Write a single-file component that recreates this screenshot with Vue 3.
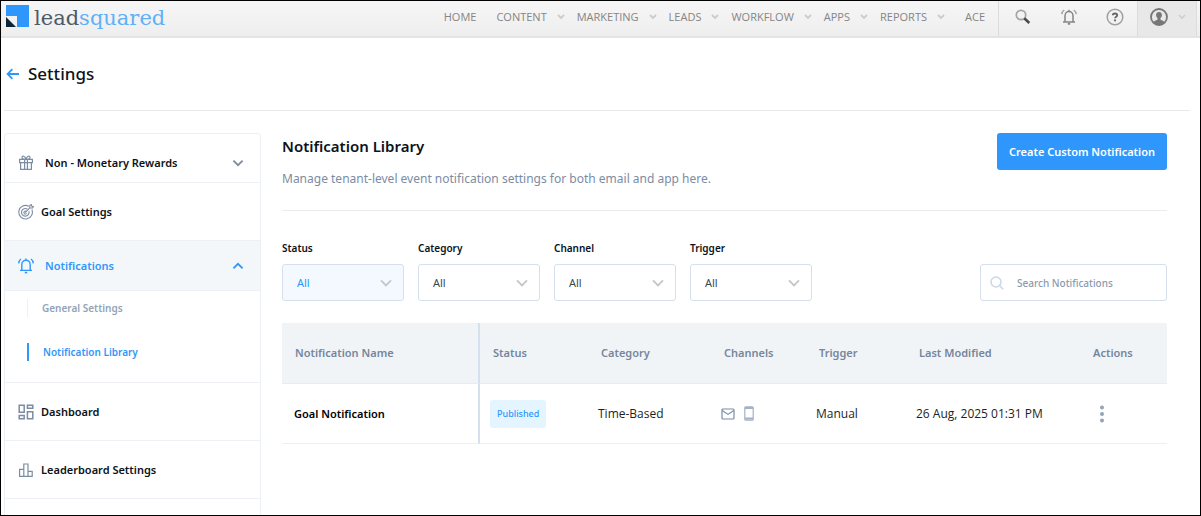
<script setup>
import { ref } from 'vue';

const navItems = [
  { label: 'Home', menu: false },
  { label: 'Content', menu: true },
  { label: 'Marketing', menu: true },
  { label: 'Leads', menu: true },
  { label: 'Workflow', menu: true },
  { label: 'Apps', menu: true },
  { label: 'Reports', menu: true },
  { label: 'Ace', menu: false }
];

const filters = ref([
  { id: 'status', label: 'Status', value: 'All', active: true },
  { id: 'category', label: 'Category', value: 'All', active: false },
  { id: 'channel', label: 'Channel', value: 'All', active: false },
  { id: 'trigger', label: 'Trigger', value: 'All', active: false }
]);

const search = ref('');

const notifications = [
  {
    id: 1,
    name: 'Goal Notification',
    status: 'Published',
    category: 'Time-Based',
    trigger: 'Manual',
    lastModified: '26 Aug, 2025 01:31 PM'
  }
];
</script>

<template>
  <div class="page">
    <header class="topbar">
      <a href="#" class="logo" aria-label="leadsquared">
        <svg width="23" height="23" viewBox="0 0 23 23">
          <path d="M0 0H23V22H11V11H0Z" fill="#2f97fb" />
          <path d="M0 12L10 22H0Z" fill="#0d2436" />
        </svg>
        <span class="logo-text">lead<span class="logo-blue">squared</span></span>
      </a>

      <nav class="nav">
        <a v-for="item in navItems" :key="item.label" href="#" class="nav-item" :class="{ plain: !item.menu }">
          {{ item.label }}
          <svg v-if="item.menu" width="8" height="6" viewBox="0 0 8 6">
            <path d="M1 1L4 4L7 1" fill="none" stroke="#cccccc" stroke-width="1.8" />
          </svg>
        </a>
      </nav>

      <div class="tools">
        <button type="button" class="tool" aria-label="Search">
          <svg width="16" height="16" viewBox="0 0 16 16" fill="none">
            <circle cx="6" cy="6" r="4.7" stroke="#a5a5a5" stroke-width="1.7" />
            <path d="M9.3 9.3L14.3 14" stroke="#4a4a4a" stroke-width="2.6" />
          </svg>
        </button>
        <button type="button" class="tool" aria-label="Notifications">
          <svg width="16" height="16" viewBox="0 0 16 16" fill="none" stroke="#858585" stroke-width="1.5">
            <path d="M2 13H14M4 13V7C4 4.4 5.8 2.6 8 2.6S12 4.4 12 7V13M8 0.8V2.6" />
            <path d="M6.8 14.8H9.2" stroke-width="1.8" />
            <path d="M3.2 1C1.8 2 1 3.4 0.8 5.2M12.8 1C14.2 2 15 3.4 15.2 5.2" stroke="#a5a5a5" />
          </svg>
        </button>
        <button type="button" class="tool" aria-label="Help">
          <svg width="18" height="18" viewBox="0 0 18 18" fill="none">
            <circle cx="9" cy="9" r="7.8" stroke="#a0a0a0" stroke-width="1.5" />
            <path d="M6.8 7.2C6.8 4.9 11.2 4.9 11.2 7.2C11.2 8.7 9 8.6 9 10.3" stroke="#666" stroke-width="1.8" />
            <path d="M8 11.4H10V13.2H8Z" fill="#666" />
          </svg>
        </button>
        <button type="button" class="tool account" aria-label="Account">
          <svg width="18" height="18" viewBox="0 0 18 18">
            <circle cx="9" cy="9" r="8" fill="none" stroke="#777" stroke-width="1.8" />
            <path d="M9 4C6.9 4 5.9 5.4 6.1 7.3C6.2 8.7 6.8 9.6 7.5 10.1V11.4C7.3 12.4 4.4 12.4 3.4 14C6.4 17.6 11.6 17.6 14.6 14C13.6 12.4 10.7 12.4 10.5 11.4V10.1C11.2 9.6 11.8 8.7 11.9 7.3C12.1 5.4 11.1 4 9 4Z" fill="#777" />
          </svg>
          <svg width="8" height="6" viewBox="0 0 8 6">
            <path d="M1 1L4 4L7 1" fill="none" stroke="#cfcfcf" stroke-width="1.6" />
          </svg>
        </button>
      </div>
    </header>

    <div class="page-title">
      <a href="#" class="back" aria-label="Back">
        <svg width="14" height="12" viewBox="0 0 14 12" fill="none" stroke="#2f97fb" stroke-width="1.8">
          <path d="M13 6H2M6.4 1.2L1.6 6L6.4 10.8" />
        </svg>
      </a>
      <h1>Settings</h1>
    </div>

    <div class="layout">
      <aside class="sidebar">
        <a href="#" class="side-item group rewards">
          <svg width="16" height="16" viewBox="0 0 16 16" fill="none" stroke="#7c8ca3" stroke-width="1.2">
            <path d="M1.6 4.4H14.4V7.6H1.6ZM2.6 7.6V14.4H13.4V7.6M6.6 4.4V14.4M9.4 4.4V14.4" />
            <path d="M8 4.4C4.6 4.4 3.8 3.4 4 2.2C4.4 0.6 7.2 0.6 8 4.4C8.8 0.6 11.6 0.6 12 2.2C12.2 3.4 11.4 4.4 8 4.4Z" />
          </svg>
          <span>Non - Monetary Rewards</span>
          <svg class="toggle" width="12" height="8" viewBox="0 0 12 8" fill="none" stroke="#7c8ca3" stroke-width="1.8">
            <path d="M1.4 1.6L6 6.2L10.6 1.6" />
          </svg>
        </a>
        <a href="#" class="side-item">
          <svg width="16" height="16" viewBox="0 0 16 16" fill="none" stroke="#7c8ca3" stroke-width="1.1">
            <path d="M10.8 2.2A6.8 6.8 0 1 0 13.8 5.4" />
            <path d="M9.4 5.2A3.8 3.8 0 1 0 10.9 7.2" />
            <path d="M8.6 7.6A1.5 1.5 0 1 0 8.6 9.4M7.2 8.6L12 3.6M11.8 1.4V4H14.6L15.4 2.4L13.8 2.2L13.4 0.6Z" />
          </svg>
          <span>Goal Settings</span>
        </a>
        <a href="#" class="side-item group open">
          <svg width="16" height="16" viewBox="0 0 16 16" fill="none" stroke="#2f97fb" stroke-width="1.4">
            <path d="M2 12.4H14M3.8 12.4V6.4C3.8 4 5.6 2.2 8 2.2S12.2 4 12.2 6.4V12.4M8 0.6V2.2" />
            <path d="M6.8 14.6H9.2" stroke-width="1.6" />
            <path d="M3 1C1.6 2 0.9 3.4 0.7 5.4M13 1C14.4 2 15.1 3.4 15.3 5.4" />
          </svg>
          <span>Notifications</span>
          <svg class="toggle" width="12" height="8" viewBox="0 0 12 8" fill="none" stroke="#2f97fb" stroke-width="1.8">
            <path d="M1.4 6.4L6 1.8L10.6 6.4" />
          </svg>
        </a>
        <div class="submenu">
          <a href="#" class="sub-item">General Settings</a>
          <a href="#" class="sub-item current">Notification Library</a>
        </div>
        <a href="#" class="side-item">
          <svg width="16" height="16" viewBox="0 0 16 16" fill="none" stroke="#7c8ca3" stroke-width="1.5">
            <path d="M1.2 1.2H6.2V8.2H1.2ZM9.4 1.2H14.8V4.2H9.4ZM1.2 11.6H6.2V14.8H1.2ZM9.4 7.8H14.8V14.8H9.4Z" />
          </svg>
          <span>Dashboard</span>
        </a>
        <a href="#" class="side-item">
          <svg width="16" height="16" viewBox="0 0 16 16" fill="none" stroke="#7c8ca3" stroke-width="1.2">
            <path d="M1.6 14.4V7.4H5.8V14.4ZM5.8 14.4V2H10V14.4ZM10 14.4V9.4H14.2V14.4Z" />
          </svg>
          <span>Leaderboard Settings</span>
        </a>
      </aside>

      <main class="content">
        <section class="intro">
          <div>
            <h2>Notification Library</h2>
            <p>Manage tenant-level event notification settings for both email and app here.</p>
          </div>
          <button type="button" class="btn-primary">Create Custom Notification</button>
        </section>

        <section class="filters">
          <div v-for="filter in filters" :key="filter.id" class="filter" :class="{ active: filter.active }">
            <label :for="filter.id">{{ filter.label }}</label>
            <div class="select-wrap">
              <select :id="filter.id" v-model="filter.value">
                <option>All</option>
              </select>
              <svg width="12" height="8" viewBox="0 0 12 8" fill="none" stroke="#c3c6ca" stroke-width="1.8">
                <path d="M1 1.4L6 6.4L11 1.4" />
              </svg>
            </div>
          </div>
          <div class="search">
            <svg width="14" height="14" viewBox="0 0 14 14" fill="none" stroke="#cbd9e8" stroke-width="1.6">
              <circle cx="6" cy="6" r="5" />
              <path d="M9.6 9.6L13.2 13.2" />
            </svg>
            <input v-model="search" type="text" placeholder="Search Notifications" aria-label="Search Notifications">
          </div>
        </section>

        <table class="table">
          <colgroup>
            <col>
            <col class="col-status">
            <col class="col-category">
            <col class="col-channels">
            <col class="col-trigger">
            <col class="col-modified">
            <col class="col-actions">
          </colgroup>
          <thead>
            <tr>
              <th scope="col">Notification Name</th>
              <th scope="col">Status</th>
              <th scope="col">Category</th>
              <th scope="col">Channels</th>
              <th scope="col">Trigger</th>
              <th scope="col">Last Modified</th>
              <th scope="col">Actions</th>
            </tr>
          </thead>
          <tbody>
            <tr v-for="item in notifications" :key="item.id">
              <td class="name">{{ item.name }}</td>
              <td><span class="badge">{{ item.status }}</span></td>
              <td>{{ item.category }}</td>
              <td>
                <div class="channels">
                  <svg width="14" height="12" viewBox="0 0 14 12" fill="none" stroke="#7c8ca3" stroke-width="1.2">
                    <rect x="1" y="1" width="12" height="10" rx="1" />
                    <path d="M1.2 2.6L7 6.4L12.8 2.6" />
                  </svg>
                  <svg width="10" height="15" viewBox="0 0 10 15" fill="none" stroke="#a3b1c6">
                    <rect x="0.8" y="0.8" width="8.4" height="13.4" rx="1" stroke-width="1.2" />
                    <path d="M1 2H9M1 12.6H9" stroke-width="2" />
                  </svg>
                </div>
              </td>
              <td>{{ item.trigger }}</td>
              <td>{{ item.lastModified }}</td>
              <td>
                <button type="button" class="more" aria-label="Actions">
                  <svg width="4" height="18" viewBox="0 0 4 18" fill="#94a3b8">
                    <circle cx="2" cy="2.4" r="2" />
                    <circle cx="2" cy="9" r="2" />
                    <circle cx="2" cy="15.6" r="2" />
                  </svg>
                </button>
              </td>
            </tr>
          </tbody>
        </table>
      </main>
    </div>
  </div>
</template>

<style>
body {
  margin: 0;
}
</style>

<style scoped>
.page {
  box-sizing: border-box;
  min-height: 100vh;
  display: flex;
  flex-direction: column;
  border: 1px solid #000;
  background: #fff;
  color: #0b1220;
  font-family: "Noto Sans", "Open Sans", sans-serif;
  font-size: 12px;
  line-height: 16px;
}

a {
  color: inherit;
  text-decoration: none;
}

button,
input,
select {
  font-family: inherit;
}

svg {
  display: block;
  flex: none;
}

/* Top bar */
.topbar {
  display: flex;
  height: 35px;
  padding: 0 3px 0 5px;
  border-bottom: 2px solid #e4e4e4;
  background: linear-gradient(#f6f6f6, #eeeeee);
}

.logo {
  display: flex;
  align-items: flex-start;
  gap: 5px;
  padding-top: 4px;
}

.logo-text {
  color: #4c5b68;
  font-family: "DejaVu Serif", serif;
  font-size: 21px;
  line-height: 26px;
}

.logo-blue {
  color: #5fb0f7;
}

.nav {
  display: flex;
  align-items: center;
  gap: 12px;
  margin-left: auto;
  padding: 0 5px 4px 0;
  color: #858585;
  font-family: "Open Sans", sans-serif;
  font-size: 11px;
  text-transform: uppercase;
}

.nav-item {
  display: flex;
  align-items: center;
  gap: 10px;
}

.nav-item.plain {
  padding: 0 8px;
}

.tools {
  display: flex;
  border-left: 1px solid #dcdcdc;
}

.tool {
  display: flex;
  align-items: center;
  justify-content: center;
  width: 46px;
  padding: 0 0 4px 2px;
  border: 0;
  background: none;
}

.tool.account {
  gap: 10px;
  width: 60px;
  border-left: 1px solid #dcdcdc;
  border-right: 1px solid #dcdcdc;
  background: #e8e8e8;
}

/* Title */
.page-title {
  display: flex;
  align-items: center;
  gap: 8px;
  height: 72px;
  margin: 0 10px 0 3px;
  padding-left: 2px;
  border-bottom: 1px solid #eaeaea;
}

h1 {
  margin: 0;
  font-size: 17px;
  font-weight: 500;
  line-height: 24px;
}

.layout {
  display: flex;
  flex: 1;
  padding: 22px 33px 0 3px;
}

/* Sidebar */
.sidebar {
  flex: none;
  box-sizing: border-box;
  width: 257px;
  border: 1px solid #edf1f6;
  border-bottom: 0;
  border-radius: 4px 4px 0 0;
  font-size: 11px;
  font-weight: 600;
}

.side-item {
  display: flex;
  align-items: center;
  gap: 7px;
  height: 57px;
  padding: 0 16px 0 13px;
  border-bottom: 1px solid #edf1f6;
}

.side-item.group {
  gap: 11px;
  height: 49px;
}

.side-item.rewards {
  box-sizing: border-box;
  padding-top: 9px;
}

.side-item.open {
  background: #f3f7fa;
  color: #2f97fb;
}

.toggle {
  margin-left: auto;
}

.submenu {
  padding: 8px 0 21px 22px;
  border-bottom: 1px solid #edf1f6;
  font-size: 10px;
}

.sub-item {
  display: block;
  padding: 0 0 0 14px;
  border-left: 1px solid #edf1f6;
  color: #94a3b8;
  line-height: 18px;
}

.sub-item.current {
  margin-top: 26px;
  border-left: 2px solid #2f97fb;
  color: #2f97fb;
}

/* Content */
.content {
  flex: 1;
  min-width: 0;
  margin-left: 21px;
}

.intro {
  display: flex;
  align-items: flex-start;
  justify-content: space-between;
  padding-bottom: 22px;
  border-bottom: 1px solid #eaedf0;
}

h2 {
  margin: 0;
  font-size: 15px;
  font-weight: 600;
  line-height: 26px;
}

.intro p {
  margin: 11px 0 0;
  color: #7c8ca3;
  font-size: 12px;
  line-height: 18px;
}

.btn-primary {
  height: 37px;
  padding: 0 12px;
  border: 0;
  border-radius: 3px;
  background: #2f97fb;
  color: #fff;
  font-size: 11px;
  font-weight: 600;
}

.filters {
  display: flex;
  align-items: flex-end;
  gap: 14px;
  padding: 29px 0 22px;
}

.filter {
  width: 122px;
}

.filter label {
  display: block;
  margin-bottom: 8px;
  font-size: 10px;
  font-weight: 600;
}

.select-wrap {
  position: relative;
}

.select-wrap svg {
  position: absolute;
  top: 15px;
  right: 12px;
  pointer-events: none;
}

select {
  display: block;
  box-sizing: border-box;
  width: 100%;
  height: 37px;
  padding: 0 14px;
  border: 1px solid #d5e0ec;
  border-radius: 3px;
  background: #fff;
  color: #3f4650;
  font-size: 11px;
  appearance: none;
}

.filter.active select {
  background: #f3f9ff;
  color: #2f97fb;
}

.search {
  display: flex;
  align-items: center;
  gap: 13px;
  box-sizing: border-box;
  width: 187px;
  height: 37px;
  margin-left: auto;
  padding: 0 9px;
  border: 1px solid #d5e0ec;
  border-radius: 3px;
}

.search input {
  min-width: 0;
  width: 100%;
  padding: 0;
  border: 0;
  outline: 0;
  background: none;
  font-size: 10px;
  font-weight: 500;
}

.search input::placeholder {
  color: #8b9bb0;
}

/* Table */
.table {
  width: 100%;
  border-collapse: separate;
  border-spacing: 0;
  table-layout: fixed;
}

.col-status { width: 108px; }
.col-category { width: 123px; }
.col-channels { width: 95px; }
.col-trigger { width: 100px; }
.col-modified { width: 174px; }
.col-actions { width: 87px; }

th,
td {
  height: 60px;
  padding: 0 0 0 10px;
  border-bottom: 1px solid #edf0f3;
  text-align: left;
  white-space: nowrap;
}

th {
  padding-left: 13px;
  border-bottom-color: #e6ecf1;
  background: #f0f4f7;
  color: #76869c;
  font-size: 11px;
  font-weight: 600;
}

td {
  height: 59px;
  color: #1b1f26;
  font-family: "Open Sans", sans-serif;
}

th:first-child,
td:first-child {
  border-right: 2px solid #d5e0ef;
}

td.name {
  padding-left: 12px;
  color: #000;
  font-family: "Noto Sans", sans-serif;
  font-size: 11px;
  font-weight: 600;
}

.badge {
  display: inline-block;
  padding: 6px 7px;
  border-radius: 3px;
  background: #e5f5ff;
  color: #2f97fb;
  font-family: "Noto Sans", sans-serif;
  font-size: 9px;
  font-weight: 500;
}

.channels {
  display: flex;
  align-items: center;
  gap: 9px;
}

.more {
  display: block;
  padding: 0 10px;
  border: 0;
  background: none;
}
</style>
